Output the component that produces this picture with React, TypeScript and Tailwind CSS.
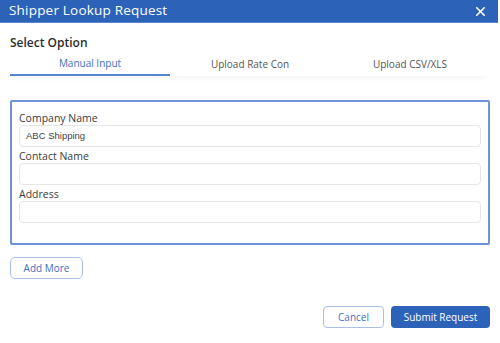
import { X } from "lucide-react";

const TABS = ["Manual Input", "Upload Rate Con", "Upload CSV/XLS"];

const FIELDS = [
  { label: "Company Name", value: "ABC Shipping" },
  { label: "Contact Name", value: "" },
  { label: "Address", value: "" },
];

export default function App() {
  return (
    <div
      className="h-[343px] w-[500px] overflow-hidden bg-white text-[#3a3a3a]"
      style={{ fontFamily: '"Open Sans", "Noto Sans", sans-serif' }}
    >
      <header className="flex h-[23px] w-[498px] items-center justify-between border-b border-[#5a86d0] bg-[#2c63b9] pl-[9px] pr-[10px]">
        <h1 className="text-[13.5px] leading-none font-medium tracking-[0.2px] text-white">Shipper Lookup Request</h1>
        <X className="h-[15px] w-[15px] text-white" strokeWidth={2.6} />
      </header>

      <div className="px-[10px]">
        <div className="pt-[12px] text-[12px] leading-[15px] font-semibold text-[#2d2d2d]">Select Option</div>

        <div className="mt-[4px] grid grid-cols-3 shadow-[0_4px_6px_-3px_rgba(0,0,0,0.06)]">
          {TABS.map((t, i) => (
            <div
              key={t}
              className={
                i === 0
                  ? "flex h-[22px] items-start justify-center border-b-2 border-[#5b84cf] pt-[2px] text-[10px] text-[#3f6fc2]"
                  : "flex h-[22px] items-start justify-center pt-[3px] text-[10px] text-[#555]"
              }
            >
              {t}
            </div>
          ))}
        </div>

        <div className="mt-[24px] h-[145px] rounded-[2px] border-2 border-[#6f93d9] px-[7px] pt-[9px]">
          {FIELDS.map((f) => (
            <div key={f.label} className="mb-[2px]">
              <div className="text-[10.5px] leading-[14px] text-[#3c3c3c]">{f.label}</div>
              <div
                className="flex h-[22px] items-center rounded-[4px] border border-[#e6e6e6] px-[6px] text-[9.5px] text-[#444]"
                style={{ fontFamily: '"Liberation Sans", Arial, sans-serif' }}
              >
                {f.value}
              </div>
            </div>
          ))}
        </div>

        <button className="mt-[12px] flex h-[22px] w-[73px] items-center justify-center rounded-[5px] border border-[#a9bfe6] text-[10px] text-[#3f6fc2]">
          Add More
        </button>

        <div className="mt-[27px] flex justify-end gap-[7px]">
          <button className="flex h-[22px] w-[61px] items-center justify-center rounded-[4px] border border-[#a9bfe6] text-[10px] text-[#3f6fc2]">
            Cancel
          </button>
          <button className="flex h-[22px] w-[99px] items-center justify-center rounded-[4px] bg-[#2c63b9] text-[10px] text-white">
            Submit Request
          </button>
        </div>
      </div>
    </div>
  );
}
